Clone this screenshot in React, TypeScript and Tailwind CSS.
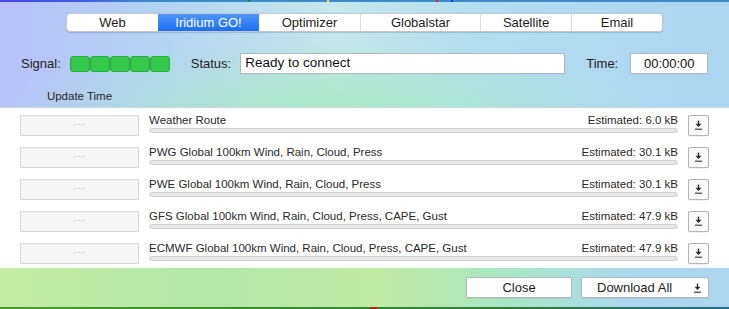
import React from "react";

const tabs = [
  { label: "Web", w: "w-[91px]" },
  { label: "Iridium GO!", w: "w-[101px]" },
  { label: "Optimizer", w: "w-[101px]" },
  { label: "Globalstar", w: "w-[120px]" },
  { label: "Satellite", w: "w-[91px]" },
  { label: "Email", w: "w-[91px]" },
];

const files = [
  { name: "Weather Route", size: "6.0 kB" },
  { name: "PWG Global 100km Wind, Rain, Cloud, Press", size: "30.1 kB" },
  { name: "PWE Global 100km Wind, Rain, Cloud, Press", size: "30.1 kB" },
  { name: "GFS Global 100km Wind, Rain, Cloud, Press, CAPE, Gust", size: "47.9 kB" },
  { name: "ECMWF Global 100km Wind, Rain, Cloud, Press, CAPE, Gust", size: "47.9 kB" },
];

function DownloadIcon() {
  return (
    <svg width="9" height="10" viewBox="0 0 9 10" className="text-[#2a2a2a]">
      <path d="M4.5 0.5V4.5" stroke="currentColor" strokeWidth="1.3" />
      <path d="M1.5 3.8H7.5L4.5 7Z" fill="currentColor" />
      <path d="M1 9.2H8" stroke="currentColor" strokeWidth="1.1" />
    </svg>
  );
}

function FileRow({ name, size }: { name: string; size: string }) {
  return (
    <div className="flex items-center h-[22px] mb-[10px]">
      <div className="ml-[20px] w-[119px] h-[21px] bg-[#f6f6f6] border border-[#d9d9d9] flex items-center justify-center text-[9px] text-[#c2c2c2] tracking-[1px]">
        ---
      </div>
      <div className="ml-[10px] w-[529px] flex flex-col -mt-[3px]">
        <div className="flex justify-between text-[11.5px] leading-[13px] text-[#2a2a2a]">
          <span>{name}</span>
          <span>Estimated: {size}</span>
        </div>
        <div className="mt-[1px] h-[5px] rounded-full bg-[#e8e8e8] border border-[#d2d2d2]" />
      </div>
      <button className="ml-[10px] w-[21px] h-[21px] bg-[#fafafa] border border-[#b4b4b4] rounded-[2px] flex items-center justify-center shadow-[0_0.5px_0.5px_rgba(0,0,0,0.1)]">
        <DownloadIcon />
      </button>
    </div>
  );
}

export default function App() {
  return (
    <div className="w-[729px] h-[309px] overflow-hidden flex flex-col font-['Liberation_Sans',Arial,sans-serif] text-[#1e1e1e]">
      <div className="h-[2px] flex bg-[linear-gradient(90deg,#4545ee_0%,#4060e0_12%,#3a8acb_20%,#3a8ccb_100%)]">
        <div className="ml-[248px] w-[2px] bg-[#1a8a3a]" />
        <div className="ml-[77px] w-[2px] bg-[#f0e040]" />
        <div className="ml-[107px] w-[2px] bg-[#e02020]" />
        <div className="ml-[13px] w-[2px] bg-[#1030f0]" />
      </div>

      <div className="h-[105px] flex flex-col bg-[radial-gradient(ellipse_45%_70%_at_45%_105%,rgba(166,232,196,0.95),rgba(166,232,196,0)),linear-gradient(90deg,#b9c1fa_0%,#b3d3f3_22%,#c6e7ea_46%,#b2def0_66%,#acd5f0_100%)]">
        <div className="mt-[11px] mx-auto flex h-[19px] rounded-[4px] bg-white border border-[#c4c8ce] shadow-[0_0.5px_1px_rgba(0,0,0,0.15)] overflow-hidden text-[13px]">
          {tabs.map((t, i) => (
            <div
              key={t.label}
              className={
                i === 1
                  ? `${t.w} flex items-center justify-center text-white bg-[linear-gradient(180deg,#4d95f8,#1b6ff5)]`
                  : `${t.w} flex items-center justify-center ${i > 0 && i !== 2 ? "border-l border-[#dcdcdc]" : ""}`
              }
            >
              {t.label}
            </div>
          ))}
        </div>

        <div className="mt-[21px] flex items-center h-[21px] text-[13px]">
          <span className="ml-[21px]">Signal:</span>
          <div className="ml-[9px] flex h-[16px]">
            {[0, 1, 2, 3, 4].map((n) => (
              <div key={n} className="w-[20px] h-[16px] bg-[#34c84a] border border-[#2aa940] rounded-[3px]" />
            ))}
          </div>
          <span className="ml-[21px]">Status:</span>
          <div className="ml-[9px] w-[325px] h-[21px] bg-white border border-[#aab6c0] flex items-center pl-[4px] text-[13.5px] text-[#111]">
            Ready to connect
          </div>
          <span className="ml-[21px]">Time:</span>
          <div className="ml-[12px] w-[78px] h-[21px] bg-white border border-[#aab6c0] flex items-center justify-center text-[13px] text-[#111]">
            00:00:00
          </div>
        </div>

        <div className="mt-[14px] ml-[20px] w-[119px] text-center text-[11.5px] text-[#262626]">Update Time</div>
      </div>

      <div className="h-[161px] bg-white pt-[6px] border-t border-[#c8d8dc]">
        {files.map((f) => (
          <FileRow key={f.name} name={f.name} size={f.size} />
        ))}
      </div>

      <div className="h-[39px] flex items-center justify-end pr-[20px] bg-[linear-gradient(90deg,#c5eca4_0%,#b2e8a8_28%,#c1eaa4_52%,#a9e8c2_68%,#acd9ef_86%,#acd6f0_100%)]">
        <button className="w-[106px] h-[21px] bg-white border border-[#b6b6b6] rounded-[2px] text-[13px] text-[#1e1e1e] shadow-[0_0.5px_0.5px_rgba(0,0,0,0.1)]">
          Close
        </button>
        <button className="ml-[9px] w-[128px] h-[21px] bg-white border border-[#b6b6b6] rounded-[2px] text-[13px] text-[#1e1e1e] flex items-center pl-[15px] pr-[6px] justify-between shadow-[0_0.5px_0.5px_rgba(0,0,0,0.1)]">
          <span>Download All</span>
          <DownloadIcon />
        </button>
      </div>

      <div className="h-[2px] flex bg-[linear-gradient(90deg,#4a9a30_0%,#3a8a2c_40%,#2f7a3a_70%,#2a6a8a_100%)]">
        <div className="ml-[370px] w-[7px] bg-[#b02020]" />
      </div>
    </div>
  );
}
